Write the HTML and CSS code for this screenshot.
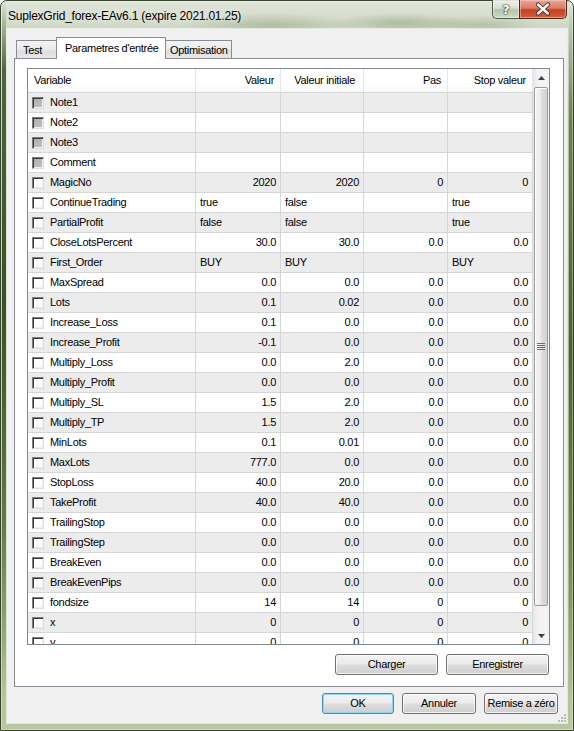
FILE: index.html
```html
<!DOCTYPE html>
<html>
<head>
<meta charset="utf-8">
<link rel="stylesheet" href="styles.css">
</head>
<body>
<div class="window">
  <div class="titlebar">
    <div class="title">SuplexGrid_forex-EAv6.1 (expire 2021.01.25)</div>
    <div class="caption-btns">
      <div class="cbtn help"><span class="qmark">?</span></div>
      <div class="cbtn close">
        <svg width="46" height="18" viewBox="0 0 46 18">
          <path d="M18 4.5 L28 13.5 M28 4.5 L18 13.5" stroke="#3a2a24" stroke-width="4.2" stroke-linecap="round" fill="none"/>
          <path d="M18 4.5 L28 13.5 M28 4.5 L18 13.5" stroke="#ffffff" stroke-width="2.4" stroke-linecap="round" fill="none"/>
        </svg>
      </div>
    </div>
  </div>
  <div class="client">
    <div class="tabs">
      <div class="tab t1">Test</div>
      <div class="tab active">Parametres d'entrée</div>
      <div class="tab t3">Optimisation</div>
    </div>
    <div class="panel">
      <div class="listview">
        <div class="lv-main">
          <div class="lv-header">
            <div class="h hv">Variable</div>
            <div class="h">Valeur</div>
            <div class="h">Valeur initiale</div>
            <div class="h">Pas</div>
            <div class="h">Stop valeur</div>
          </div>
          <div class="lv-body">
            <div class="row"><div class="c v"><span class="cb dis"></span>Note1</div><div class="c"></div><div class="c"></div><div class="c"></div><div class="c"></div></div>
            <div class="row"><div class="c v"><span class="cb dis"></span>Note2</div><div class="c"></div><div class="c"></div><div class="c"></div><div class="c"></div></div>
            <div class="row"><div class="c v"><span class="cb dis"></span>Note3</div><div class="c"></div><div class="c"></div><div class="c"></div><div class="c"></div></div>
            <div class="row"><div class="c v"><span class="cb dis"></span>Comment</div><div class="c"></div><div class="c"></div><div class="c"></div><div class="c"></div></div>
            <div class="row"><div class="c v"><span class="cb"></span>MagicNo</div><div class="c">2020</div><div class="c">2020</div><div class="c">0</div><div class="c">0</div></div>
            <div class="row"><div class="c v"><span class="cb"></span>ContinueTrading</div><div class="c l">true</div><div class="c l">false</div><div class="c"></div><div class="c l">true</div></div>
            <div class="row"><div class="c v"><span class="cb"></span>PartialProfit</div><div class="c l">false</div><div class="c l">false</div><div class="c"></div><div class="c l">true</div></div>
            <div class="row"><div class="c v"><span class="cb"></span>CloseLotsPercent</div><div class="c">30.0</div><div class="c">30.0</div><div class="c">0.0</div><div class="c">0.0</div></div>
            <div class="row"><div class="c v"><span class="cb"></span>First_Order</div><div class="c l">BUY</div><div class="c l">BUY</div><div class="c"></div><div class="c l">BUY</div></div>
            <div class="row"><div class="c v"><span class="cb"></span>MaxSpread</div><div class="c">0.0</div><div class="c">0.0</div><div class="c">0.0</div><div class="c">0.0</div></div>
            <div class="row"><div class="c v"><span class="cb"></span>Lots</div><div class="c">0.1</div><div class="c">0.02</div><div class="c">0.0</div><div class="c">0.0</div></div>
            <div class="row"><div class="c v"><span class="cb"></span>Increase_Loss</div><div class="c">0.1</div><div class="c">0.0</div><div class="c">0.0</div><div class="c">0.0</div></div>
            <div class="row"><div class="c v"><span class="cb"></span>Increase_Profit</div><div class="c">-0.1</div><div class="c">0.0</div><div class="c">0.0</div><div class="c">0.0</div></div>
            <div class="row"><div class="c v"><span class="cb"></span>Multiply_Loss</div><div class="c">0.0</div><div class="c">2.0</div><div class="c">0.0</div><div class="c">0.0</div></div>
            <div class="row"><div class="c v"><span class="cb"></span>Multiply_Profit</div><div class="c">0.0</div><div class="c">0.0</div><div class="c">0.0</div><div class="c">0.0</div></div>
            <div class="row"><div class="c v"><span class="cb"></span>Multiply_SL</div><div class="c">1.5</div><div class="c">2.0</div><div class="c">0.0</div><div class="c">0.0</div></div>
            <div class="row"><div class="c v"><span class="cb"></span>Multiply_TP</div><div class="c">1.5</div><div class="c">2.0</div><div class="c">0.0</div><div class="c">0.0</div></div>
            <div class="row"><div class="c v"><span class="cb"></span>MinLots</div><div class="c">0.1</div><div class="c">0.01</div><div class="c">0.0</div><div class="c">0.0</div></div>
            <div class="row"><div class="c v"><span class="cb"></span>MaxLots</div><div class="c">777.0</div><div class="c">0.0</div><div class="c">0.0</div><div class="c">0.0</div></div>
            <div class="row"><div class="c v"><span class="cb"></span>StopLoss</div><div class="c">40.0</div><div class="c">20.0</div><div class="c">0.0</div><div class="c">0.0</div></div>
            <div class="row"><div class="c v"><span class="cb"></span>TakeProfit</div><div class="c">40.0</div><div class="c">40.0</div><div class="c">0.0</div><div class="c">0.0</div></div>
            <div class="row"><div class="c v"><span class="cb"></span>TrailingStop</div><div class="c">0.0</div><div class="c">0.0</div><div class="c">0.0</div><div class="c">0.0</div></div>
            <div class="row"><div class="c v"><span class="cb"></span>TrailingStep</div><div class="c">0.0</div><div class="c">0.0</div><div class="c">0.0</div><div class="c">0.0</div></div>
            <div class="row"><div class="c v"><span class="cb"></span>BreakEven</div><div class="c">0.0</div><div class="c">0.0</div><div class="c">0.0</div><div class="c">0.0</div></div>
            <div class="row"><div class="c v"><span class="cb"></span>BreakEvenPips</div><div class="c">0.0</div><div class="c">0.0</div><div class="c">0.0</div><div class="c">0.0</div></div>
            <div class="row"><div class="c v"><span class="cb"></span>fondsize</div><div class="c">14</div><div class="c">14</div><div class="c">0</div><div class="c">0</div></div>
            <div class="row"><div class="c v"><span class="cb"></span>x</div><div class="c">0</div><div class="c">0</div><div class="c">0</div><div class="c">0</div></div>
            <div class="row"><div class="c v"><span class="cb"></span>y</div><div class="c">0</div><div class="c">0</div><div class="c">0</div><div class="c">0</div></div>
          </div>
        </div>
        <div class="vscroll">
          <div class="sb-arrow">
            <svg width="7" height="4" viewBox="0 0 7 4"><path d="M0 4 L3.5 0 L7 4 Z" fill="#404040"/></svg>
          </div>
          <div class="sb-track">
            <div class="thumb">
              <svg width="8" height="7" viewBox="0 0 8 7">
                <path d="M0 0.5 H8 M0 2.5 H8 M0 4.5 H8 M0 6.5 H8" stroke="#6f6f6f" stroke-width="1"/>
              </svg>
            </div>
          </div>
          <div class="sb-arrow">
            <svg width="7" height="4" viewBox="0 0 7 4"><path d="M0 0 L7 0 L3.5 4 Z" fill="#404040"/></svg>
          </div>
        </div>
      </div>
      <div class="panel-btns">
        <div class="btn wide">Charger</div>
        <div class="btn wide">Enregistrer</div>
      </div>
    </div>
    <div class="dialog-btns">
      <div class="btn default ok">OK</div>
      <div class="btn mid">Annuler</div>
      <div class="btn mid">Remise a zéro</div>
    </div>
    <div class="grip">
      <svg width="9" height="9" viewBox="0 0 9 9">
        <g fill="#b9b9b9">
          <rect x="7" y="1" width="2" height="2"/>
          <rect x="4" y="4" width="2" height="2"/><rect x="7" y="4" width="2" height="2"/>
          <rect x="1" y="7" width="2" height="2"/><rect x="4" y="7" width="2" height="2"/><rect x="7" y="7" width="2" height="2"/>
        </g>
      </svg>
    </div>
  </div>
</div>
</body>
</html>
```

FILE: styles.css
```css
* { box-sizing: border-box; }
html, body { margin: 0; padding: 0; }
body {
  width: 574px;
  height: 731px;
  overflow: hidden;
  background: #ffffff;
  font-family: "Liberation Sans", Arial, sans-serif;
  color: #000;
}

.window {
  width: 574px;
  height: 731px;
  border: 1px solid #39442f;
  border-radius: 7px 7px 0 0;
  background:
    linear-gradient(to bottom, rgba(60,85,40,0) 0px, rgba(60,85,40,0.85) 70px, rgba(50,75,32,0.95) 300px, rgba(80,105,55,0.8) 520px, rgba(120,145,90,0) 690px) 1px 0 / 4px 100% no-repeat,
    linear-gradient(to bottom, rgba(60,85,40,0) 0px, rgba(60,85,40,0.6) 120px, rgba(50,75,32,0.8) 350px, rgba(80,105,55,0.6) 560px, rgba(120,145,90,0) 700px) 568px 0 / 4px 100% no-repeat,
    radial-gradient(ellipse 90px 12px at 270px 24px, rgba(110,140,90,0.35), transparent),
    radial-gradient(ellipse 70px 10px at 400px 22px, rgba(100,130,85,0.35), transparent),
    radial-gradient(ellipse 60px 10px at 480px 24px, rgba(110,140,95,0.3), transparent),
    linear-gradient(to bottom, #dfe5d8 0px, #cfd8c4 28px, #b4c3a0 110px, #a3b78a 380px, #a9bc8f 600px, #b8c79f 731px);
  display: flex;
  flex-direction: column;
  box-shadow: inset 0 0 0 1px rgba(255,255,255,0.35);
}

.titlebar {
  height: 28px;
  display: flex;
  justify-content: space-between;
  align-items: flex-start;
}
.title {
  padding: 7px 0 0 7px;
  font-size: 12px;
  line-height: 16px;
  letter-spacing: -0.22px;
  color: #000;
  text-shadow: 0 0 6px rgba(255,255,255,0.9);
}
.caption-btns {
  display: flex;
  margin-top: -1px;
  margin-right: 6px;
}
.cbtn {
  height: 19px;
  display: flex;
  align-items: center;
  justify-content: center;
}
.help {
  width: 27px;
  border: 1px solid #4d5648;
  border-top: none;
  border-right: none;
  border-radius: 0 0 0 5px;
  background: linear-gradient(to bottom, rgba(240,244,238,0.75) 0%, rgba(215,224,210,0.7) 45%, rgba(170,185,160,0.75) 55%, rgba(205,218,195,0.8) 100%);
  box-shadow: inset 0 0 0 1px rgba(255,255,255,0.45);
}
.qmark {
  font-family: "DejaVu Sans", sans-serif;
  font-weight: bold;
  font-size: 13px;
  line-height: 13px;
  color: #ffffff;
  text-shadow: 0 0 1px #2c3a2a, 0 0 1px #2c3a2a, 0 0 2px #2c3a2a;
}
.close {
  width: 48px;
  border: 1px solid #4a2820;
  border-top: none;
  border-radius: 0 0 5px 0;
  background: linear-gradient(to bottom, #e9a797 0%, #dd7c64 45%, #c6401f 55%, #d2603c 100%);
  box-shadow: inset 0 0 0 1px rgba(255,220,210,0.45);
}

.client {
  position: relative;
  margin: 0 6px;
  width: 560px;
  height: 694px;
  background: #f0f0f0;
  box-shadow: 0 0 0 1px rgba(255,255,255,0.6);
  display: flex;
  flex-direction: column;
}

/* Tabs */
.tabs {
  position: relative;
  z-index: 2;
  display: flex;
  align-items: flex-end;
  height: 21px;
  margin-top: 8px;
  padding-left: 9px;
  font-size: 11px;
  letter-spacing: -0.3px;
}
.tab {
  height: 18px;
  border: 1px solid #898c95;
  border-bottom: none;
  background: linear-gradient(to bottom, #f3f3f3 0%, #ebebeb 50%, #dedede 51%, #e6e6e6 100%);
  line-height: 16px;
  padding-top: 1px;
  white-space: nowrap;
}
.t1 { width: 41px; padding-left: 6px; }
.t3 { width: 67px; margin-left: -1px; padding-left: 4px; }
.active {
  position: relative;
  z-index: 3;
  width: 110px;
  height: 22px;
  margin-left: -1px;
  margin-bottom: -1px;
  background: #ffffff;
  padding-left: 8px;
  padding-top: 2px;
}

/* Panel */
.panel {
  position: relative;
  z-index: 1;
  margin-left: 7px;
  width: 550px;
  height: 629px;
  border: 1px solid #898c95;
  background: #ffffff;
  padding: 9px 13px 0 12px;
  display: flex;
  flex-direction: column;
}

.listview {
  width: 523px;
  height: 577px;
  border: 1px solid #828790;
  background: #ffffff;
  display: flex;
}
.lv-main {
  width: 505px;
  display: flex;
  flex-direction: column;
  font-size: 11px;
  letter-spacing: -0.3px;
}
.lv-header {
  height: 24px;
  display: flex;
  border-bottom: 1px solid #d5d5d5;
  background: linear-gradient(to bottom, #ffffff 0%, #ffffff 60%, #f7f8f9 100%);
}
.h {
  border-right: 1px solid #e3e6ea;
  line-height: 23px;
  text-align: right;
  padding-right: 6px;
  white-space: nowrap;
}
.lv-header .h:nth-child(1), .row .c:nth-child(1) { width: 168px; }
.lv-header .h:nth-child(2), .row .c:nth-child(2) { width: 85px; }
.lv-header .h:nth-child(3), .row .c:nth-child(3) { width: 83px; }
.lv-header .h:nth-child(4), .row .c:nth-child(4) { width: 84px; }
.lv-header .h:nth-child(5), .row .c:nth-child(5) { width: 85px; }
.lv-header .h:nth-child(3) { padding-right: 8px; }
.hv { text-align: left; padding-left: 6px; }

.lv-body {
  height: 551px;
  overflow: hidden;
}
.row {
  height: 20px;
  display: flex;
  border-bottom: 1px solid #d6d6d6;
}
.row:nth-child(odd) { background: #ececec; }
.c {
  border-right: 1px solid #d6d6d6;
  line-height: 19px;
  text-align: right;
  padding-right: 4px;
  white-space: nowrap;
  overflow: hidden;
}
.c.l { text-align: left; padding-left: 4px; padding-right: 0; }
.c.v {
  text-align: left;
  padding-left: 4px;
  display: flex;
  align-items: center;
}
.cb {
  width: 12px;
  height: 12px;
  margin-right: 6px;
  flex: none;
  background: #ffffff;
  border-top: 1px solid #7a7a7a;
  border-left: 1px solid #7a7a7a;
  border-right: 1px solid #dcdcdc;
  border-bottom: 1px solid #dcdcdc;
  box-shadow: inset 1px 1px 0 #3c3c3c, inset -1px -1px 0 #efefef;
}
.cb.dis {
  background: linear-gradient(135deg, #adadad, #c2c2c2);
}

/* Scrollbar */
.vscroll {
  width: 16px;
  display: flex;
  flex-direction: column;
  background: linear-gradient(to right, #e6e6e6 0%, #f3f3f3 30%, #f3f3f3 100%);
}
.sb-arrow {
  height: 17px;
  display: flex;
  align-items: center;
  justify-content: center;
  padding-left: 1px;
}
.sb-track {
  flex: 1;
  padding: 1px 1px 0 1px;
}
.thumb {
  height: 519px;
  border: 1px solid #9a9a9a;
  border-radius: 2px;
  background: linear-gradient(to right, #f4f4f4 0%, #ececec 45%, #dcdcdc 55%, #d2d2d2 100%);
  box-shadow: inset 1px 1px 0 #ffffff;
  display: flex;
  align-items: center;
  justify-content: center;
}

/* Buttons */
.btn {
  height: 21px;
  border: 1px solid #707070;
  border-radius: 3px;
  background: linear-gradient(to bottom, #f3f3f3 0%, #ebebeb 48%, #dddddd 52%, #cfcfcf 100%);
  box-shadow: inset 0 0 0 1px rgba(255,255,255,0.75);
  font-size: 11px;
  letter-spacing: -0.3px;
  line-height: 19px;
  text-align: center;
  white-space: nowrap;
}
.panel-btns {
  display: flex;
  justify-content: flex-end;
  gap: 8px;
  margin-top: 9px;
  padding-right: 1px;
}
.wide { width: 103px; }
.dialog-btns {
  display: flex;
  justify-content: flex-end;
  gap: 8px;
  margin-top: 6px;
  padding-right: 9px;
}
.ok { width: 72px; }
.mid { width: 74px; }
.btn.default {
  border-color: #3c8ec9;
  box-shadow: inset 0 0 0 1px #8fd6f5;
}

.grip {
  position: absolute;
  right: 1px;
  bottom: 1px;
  width: 9px;
  height: 9px;
  display: flex;
}
```
